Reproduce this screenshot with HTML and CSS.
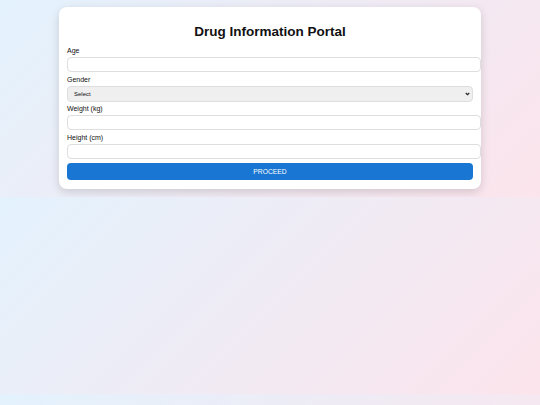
FILE: index.html
```html
<!DOCTYPE html>
<html lang="en">
<head>
    <meta charset="UTF-8">
    <meta name="viewport" content="width=device-width, initial-scale=1.0">
    <title>Drug Information Portal</title>
    <link rel="stylesheet" href="styles.css">
</head>
<body>
    <div class="container">
        <h1>Drug Information Portal</h1>

        <form id="patientForm">
            <label for="age">Age</label>
            <input type="number" id="age" name="age">

            <label for="gender">Gender</label>
            <div class="select-wrap">
                <select id="gender" name="gender">
                    <option value="">Select</option>
                    <option value="male">Male</option>
                    <option value="female">Female</option>
                </select>
                <svg class="chevron" width="5" height="4" viewBox="0 0 10 8">
                    <path d="M1.5 2 L5 5.5 L8.5 2" fill="none" stroke="#222" stroke-width="2.2"/>
                </svg>
            </div>

            <label for="weight">Weight (kg)</label>
            <input type="number" id="weight" name="weight">

            <label for="height">Height (cm)</label>
            <input type="number" id="height" name="height">

            <button type="submit">Proceed</button>
        </form>
    </div>
</body>
</html>
```

FILE: styles.css
```css
body {
    font-family: 'Liberation Sans', Arial, sans-serif;
    margin: 0;
    padding: 7px 0 8px;
    background: linear-gradient(135deg, #e3f2fd, #fce4ec);
}
.container {
    max-width: 406px;
    margin: 0 auto;
    background-color: white;
    padding: 8px 8px 9px;
    border-radius: 8px;
    box-shadow: 0 3px 10px rgba(0,0,0,0.15);
}
h1 {
    text-align: center;
    color: #111;
    font-size: 13.5px;
    line-height: 16px;
    margin: 9px 0 6px;
}
label {
    display: block;
    font-size: 7px;
    line-height: 9px;
    color: #111;
    margin-bottom: 2px;
}
input {
    display: block;
    width: 100%;
    height: 7px;
    padding: 3px;
    margin: 0 0 2.5px;
    border: 1px solid #dedede;
    border-radius: 4px;
    font-family: inherit;
    font-size: 6px;
    background-color: white;
}
.select-wrap {
    position: relative;
    margin-bottom: 2.5px;
}
select {
    display: block;
    width: 100%;
    height: 16px;
    padding: 0 6px;
    border: 1px solid #dedede;
    border-radius: 4px;
    background-color: #efefef;
    color: #111;
    font-family: inherit;
    font-size: 6px;
    appearance: none;
    -webkit-appearance: none;
}
.chevron {
    position: absolute;
    right: 3px;
    top: 6px;
    pointer-events: none;
}
button {
    display: block;
    width: 100%;
    height: 17px;
    margin-top: 4px;
    border: none;
    border-radius: 4px;
    background-color: #1976d2;
    color: white;
    font-family: inherit;
    font-size: 6.75px;
    text-transform: uppercase;
    cursor: pointer;
}
```
